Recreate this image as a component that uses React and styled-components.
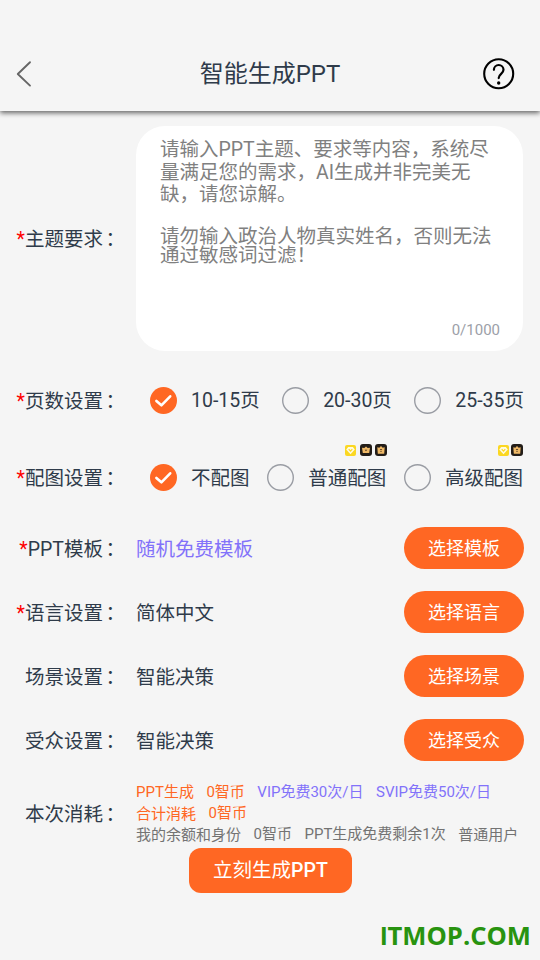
import React from "react";
import styled, { createGlobalStyle } from "styled-components";

const GlobalStyle = createGlobalStyle`
  * { box-sizing: border-box; }
  body {
    margin: 0;
    background: #f5f5f5;
    font-family: Roboto, "Noto Sans CJK SC", sans-serif;
    color: #2f3b4a;
  }
  button { font-family: inherit; border: 0; padding: 0; background: none; }
`;

const Screen = styled.main`
  width: 540px;
  height: 960px;
  display: flex;
  flex-direction: column;
  background: #f5f5f5;
  overflow: hidden;
`;

const Header = styled.header`
  height: 111px;
  padding: 37px 25px 0 16px;
  display: grid;
  grid-template-columns: 32px 1fr 32px;
  align-items: center;
  flex: none;
  background: #f5f5f5;
  box-shadow: 0 2px 5px rgba(0, 0, 0, 0.6);
`;

const Title = styled.h1`
  margin: 0;
  padding-left: 9px;
  text-align: center;
  font-size: 24px;
  font-weight: 400;
  line-height: 32px;
`;

const IconButton = styled.button`
  width: 32px;
  height: 32px;
  display: flex;
  align-items: center;
  svg { flex: none; }
`;

const Form = styled.div`
  flex: 1;
  display: flex;
  flex-direction: column;
  padding: 15px 16px 0 0;
`;

const Row = styled.section`
  display: grid;
  grid-template-columns: 122.5px 1fr;
  column-gap: 13.5px;
  align-items: center;
  flex: none;
  height: ${(p) => p.$height}px;
  margin-top: ${(p) => p.$gap || 0}px;
`;

const Label = styled.div`
  text-align: right;
  font-size: 19.5px;
  line-height: 24px;
  white-space: nowrap;
  padding-top: ${(p) => p.$drop || 0}px;
`;

const Required = styled.span`
  color: #ff0000;
`;

const Colon = styled.span`
  margin: 0 -2.5px 0 2.5px;
`;

const TopicBox = styled.div`
  height: 225px;
  width: 387px;
  border-radius: 29px;
  background: #fff;
  padding: 14px 23px 12px 24px;
  display: flex;
  flex-direction: column;
`;

const HintLine = styled.div`
  height: 19px;
  line-height: 19px;
  margin-top: ${(p) => p.$gap || 0}px;
  font-size: 19.5px;
  color: #808080;
  white-space: nowrap;
`;

const Counter = styled.div`
  margin-top: auto;
  text-align: right;
  font-size: 15px;
  line-height: 18px;
  color: #9ca0a8;
`;

const RadioGroup = styled.div`
  display: flex;
  justify-content: space-between;
  padding: 0 ${(p) => p.$inset || 0}px 0 14px;
`;

const RadioItem = styled.div`
  position: relative;
  display: flex;
  align-items: center;
  gap: 14px;
  height: 27px;
`;

const RadioDot = styled.span`
  width: 27px;
  height: 27px;
  border-radius: 50%;
  display: flex;
  align-items: center;
  justify-content: center;
  box-shadow: ${(p) => (p.$on ? "none" : "inset 0 0 0 1.4px #9a9da4")};
  background: ${(p) => (p.$on ? "#ff6723" : "transparent")};
`;

const RadioText = styled.span`
  font-size: 19.5px;
  line-height: 24px;
  white-space: nowrap;
  padding-top: ${(p) => p.$drop || 0}px;
`;

const Badges = styled.span`
  position: absolute;
  right: ${(p) => p.$right}px;
  top: -20px;
  display: flex;
  align-items: center;
  gap: ${(p) => p.$gap}px;
  svg { display: block; }
`;

const ValueBar = styled.div`
  display: flex;
  align-items: center;
  justify-content: space-between;
`;

const Value = styled.span`
  font-size: 19.5px;
  line-height: 24px;
  padding-top: 4px;
  color: ${(p) => (p.$accent ? "#8272fa" : "inherit")};
`;

const PillButton = styled.button`
  width: 120px;
  height: 42px;
  border-radius: 21px;
  background: #ff6723;
  color: #fff;
  font-size: 18px;
  line-height: 24px;
  padding-top: 2px;
`;

const CostList = styled.div`
  display: flex;
  flex-direction: column;
`;

const CostLine = styled.div`
  display: flex;
  height: 21px;
  gap: 12.5px;
  font-size: 15px;
  line-height: 21px;
  white-space: nowrap;
  color: ${(p) => p.$color};
`;

const Cost = styled.span`
  color: ${(p) => (p.$accent ? "#8272fa" : "inherit")};
  padding-top: ${(p) => (p.$drop ? 1 : 0)}px;
`;

const Submit = styled.button`
  align-self: flex-start;
  margin: 3px 0 0 189px;
  width: 163px;
  height: 45px;
  border-radius: 12px;
  background: #ff6723;
  color: #fff;
  font-size: 19.5px;
  line-height: 24px;
  flex: none;
`;

const Medium = styled.span`
  font-weight: 500;
`;

const Watermark = styled.footer`
  margin: auto -7px 7px auto;
  font-family: "Open Sans", sans-serif;
  font-weight: 700;
  font-size: 25.6px;
  line-height: 34px;
  color: #28930f;
`;

const PlainCapital = styled.span`
  font-family: "Liberation Sans", sans-serif;
`;

const BackIcon = () => (
  <svg width="16" height="28" viewBox="0 0 16 28" fill="none">
    <path d="M14 2.2 1.8 14 14 25.6" stroke="#666" strokeWidth="1.9" strokeLinecap="round" strokeLinejoin="round" />
  </svg>
);

const HelpIcon = () => (
  <svg width="32" height="32" viewBox="0 0 32 32" fill="none">
    <circle cx="15.7" cy="15.7" r="14.5" stroke="#000" strokeWidth="2.1" />
    <path d="M10.9 11.8a4.8 4.8 0 0 1 9.6 0c0 4-4.8 4.2-4.8 8.3" stroke="#000" strokeWidth="2.2" strokeLinecap="round" />
    <circle cx="15.7" cy="25" r="1.7" fill="#000" />
  </svg>
);

const CheckIcon = () => (
  <svg width="27" height="27" viewBox="0 0 27 27" fill="none">
    <path d="m6.4 13.9 5 4.4 8.8-9" stroke="#fff" strokeWidth="2.6" strokeLinecap="round" strokeLinejoin="round" />
  </svg>
);

const DiamondBadge = () => (
  <svg width="11" height="11" viewBox="0 0 11 11">
    <rect width="11" height="11" rx="2" fill="#fbd722" />
    <path d="M3.2 2h4.6l2 2.5-4.3 4.8-4.3-4.8z" fill="#fffbe0" />
    <path d="m3.7 4.2 1.8 2 1.8-2" fill="none" stroke="#fbd722" strokeWidth="1.2" />
  </svg>
);

const CrownBadge = ({ tall }) => (
  <svg width="12" height="12" viewBox="0 0 12 12">
    <rect width="12" height="12" rx="3" fill="#231d18" />
    <path
      d={tall ? "M2.3 3.2 4.3 3.8 6 2.1 7.7 3.8l2-.6L9.2 9.7H2.8z" : "M2 3.8 4.3 4.1 6 2.6l1.7 1.5 2.3-.3L9.2 9H2.8z"}
      fill="#efb967"
    />
    <path d={tall ? "M4.8 5h2.4L6 6.5zM5 8l1-1 1 1" : "m4.7 5.7 1.3 1.5 1.3-1.5z"} fill="#49351f" />
  </svg>
);

const FieldLabel = ({ required, drop, children }) => (
  <Label $drop={drop}>
    {required && <Required>*</Required>}
    {children}
    <Colon>：</Colon>
  </Label>
);

const Radio = ({ on, drop, badges, children }) => (
  <RadioItem>
    <RadioDot $on={on}>{on && <CheckIcon />}</RadioDot>
    <RadioText $drop={drop}>{children}</RadioText>
    {badges}
  </RadioItem>
);

const settings = [
  { label: "PPT模板", required: true, value: "随机免费模板", accent: true, action: "选择模板", drop: 3 },
  { label: "语言设置", required: true, value: "简体中文", action: "选择语言", drop: 4 },
  { label: "场景设置", value: "智能决策", action: "选择场景", drop: 4 },
  { label: "受众设置", value: "智能决策", action: "选择受众", drop: 4 },
];

export default function App() {
  return (
    <Screen>
      <GlobalStyle />
      <Header>
        <IconButton aria-label="返回"><BackIcon /></IconButton>
        <Title>智能生成PPT</Title>
        <IconButton aria-label="帮助"><HelpIcon /></IconButton>
      </Header>
      <Form>
        <Row $height={225}>
          <FieldLabel required drop={2}>主题要求</FieldLabel>
          <TopicBox>
            <HintLine>请输入PPT主题、要求等内容，系统尽</HintLine>
            <HintLine $gap={4}>量满足您的需求，AI生成并非完美无</HintLine>
            <HintLine $gap={3}>缺，请您谅解。</HintLine>
            <HintLine $gap={23}>请勿输入政治人物真实姓名，否则无法</HintLine>
            <HintLine>通过敏感词过滤！</HintLine>
            <Counter>0/1000</Counter>
          </TopicBox>
        </Row>
        <Row $height={27} $gap={36}>
          <FieldLabel required drop={2}>页数设置</FieldLabel>
          <RadioGroup>
            <Radio on>10-15页</Radio>
            <Radio>20-30页</Radio>
            <Radio>25-35页</Radio>
          </RadioGroup>
        </Row>
        <Row $height={27} $gap={50}>
          <FieldLabel required drop={2}>配图设置</FieldLabel>
          <RadioGroup $inset={1}>
            <Radio on drop={3}>不配图</Radio>
            <Radio drop={3} badges={<Badges $right={-1} $gap={3.5}><DiamondBadge /><CrownBadge /><CrownBadge tall /></Badges>}>
              普通配图
            </Radio>
            <Radio drop={3} badges={<Badges $right={0} $gap={2}><DiamondBadge /><CrownBadge tall /></Badges>}>
              高级配图
            </Radio>
          </RadioGroup>
        </Row>
        {settings.map((s, i) => (
          <Row key={s.label} $height={42} $gap={i === 0 ? 36 : 22}>
            <FieldLabel required={s.required} drop={s.drop}>{s.label}</FieldLabel>
            <ValueBar>
              <Value $accent={s.accent}>{s.value}</Value>
              <PillButton>{s.action}</PillButton>
            </ValueBar>
          </Row>
        ))}
        <Row $height={63} $gap={21}>
          <FieldLabel drop={3}>本次消耗</FieldLabel>
          <CostList>
            <CostLine $color="#ff6723">
              <Cost>PPT生成</Cost>
              <Cost>0智币</Cost>
              <Cost $accent>VIP免费30次/日</Cost>
              <Cost $accent>SVIP免费50次/日</Cost>
            </CostLine>
            <CostLine $color="#ff6723">
              <Cost $drop>合计消耗</Cost>
              <Cost>0智币</Cost>
            </CostLine>
            <CostLine $color="#737373">
              <Cost $drop>我的余额和身份</Cost>
              <Cost>0智币</Cost>
              <Cost>PPT生成免费剩余1次</Cost>
              <Cost $drop>普通用户</Cost>
            </CostLine>
          </CostList>
        </Row>
        <Submit>立刻生成<Medium>PPT</Medium></Submit>
        <Watermark><PlainCapital>I</PlainCapital>TMOP.COM</Watermark>
      </Form>
    </Screen>
  );
}
